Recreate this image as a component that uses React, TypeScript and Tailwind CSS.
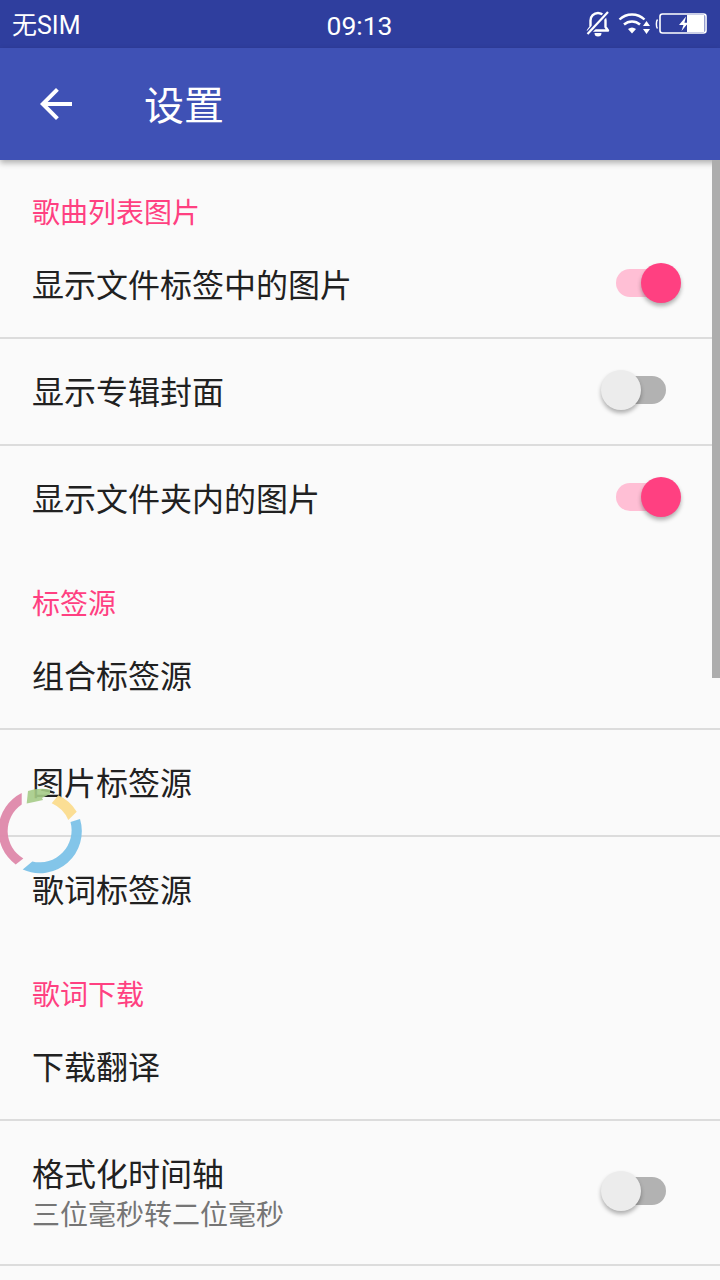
import React from "react";

const cjk = "font-['Roboto','Noto_Sans_CJK_SC','Noto_Sans_CJK_JP',sans-serif]";

function Toggle({ on }: { on: boolean }) {
  return (
    <div className="relative w-[50px] h-[28px] mr-[54px] mb-[3px] shrink-0">
      <div className={on ? "w-full h-full rounded-full bg-[#ffbfd5]" : "w-full h-full rounded-full bg-[#b2b2b2]"} />
      <div
        className={
          on
            ? "absolute -right-[15px] -top-[6px] w-[40px] h-[40px] rounded-full bg-[#ff4081] shadow-[0_3px_4px_rgba(0,0,0,0.3)]"
            : "absolute -left-[15px] -top-[6px] w-[40px] h-[40px] rounded-full bg-[#ececec] shadow-[0_3px_4px_rgba(0,0,0,0.3)]"
        }
      />
    </div>
  );
}

function Row({ title, sub, toggle, tall }: { title: string; sub?: string; toggle?: boolean; tall?: boolean }) {
  return (
    <div className={tall ? "h-[143px] flex items-center justify-between pl-[32px]" : "h-[105px] flex items-center justify-between pl-[32px]"}>
      <div className={sub ? "flex flex-col pt-[5px]" : "flex flex-col pt-[3px]"}>
        <div className="text-[32px] leading-[40px] text-[#212121]">{title}</div>
        {sub && <div className="text-[28px] leading-[41px] text-[#757575]">{sub}</div>}
      </div>
      {toggle !== undefined && <Toggle on={toggle} />}
    </div>
  );
}

const Divider = () => <div className="h-[2px] bg-[#dcdcdc]" />;

const Header = ({ children }: { children: string }) => (
  <div className="h-[72px] pl-[32px] pt-[34px] text-[28px] leading-[40px] text-[#ff4081]">{children}</div>
);

export default function App() {
  return (
    <div className={`relative w-[720px] h-[1280px] overflow-hidden bg-[#fafafa] ${cjk}`}>
      <div className="h-[48px] bg-[#2f3e9e] flex items-center justify-between pl-[12px] pr-[13px] pt-[3px] text-white">
        <div className="w-[200px] text-[25px]">无SIM</div>
        <div className="text-[26.5px] font-['Roboto']">09:13</div>
        <div className="w-[200px] flex items-center justify-end -mt-[3px]">
          <svg width="24" height="26" viewBox="0 0 24 26" fill="none" className="mr-[8px]">
            <path d="M2 19.5h20l-2.5-3.5v-6.5a7.5 7.5 0 0 0-15 0v6.5z" stroke="#fff" strokeWidth="2.4" strokeLinejoin="round" />
            <path d="M8.5 22h7a3.5 3.5 0 0 1-7 0z" fill="#fff" />
            <path d="M1.5 23L22 1" stroke="#2f3e9e" strokeWidth="5" />
            <path d="M1.5 23L22 1" stroke="#fff" strokeWidth="2.2" />
          </svg>
          <svg width="33" height="24" viewBox="0 0 33 24" fill="none" className="mr-[4px]">
            <path d="M1.5 7.5a18 18 0 0 1 25 0" stroke="#fff" strokeWidth="2.4" />
            <path d="M6 12.5a12 12 0 0 1 16 0" stroke="#fff" strokeWidth="2.4" />
            <path d="M10 17a6.5 6.5 0 0 1 8 0l-4 4.5z" fill="#fff" />
            <path d="M28.5 9l3.5 5h-7zM28.5 22l3.5-5h-7z" fill="#fff" />
          </svg>
          <svg width="52" height="22" viewBox="0 0 52 22" fill="none">
            <path d="M2.5 6.5C1 8 1 14 2.5 15.5" stroke="#fff" strokeWidth="1.5" />
            <rect x="5" y="1" width="46" height="19" rx="2.5" stroke="#fff" strokeWidth="1.6" />
            <path d="M32 2h17.5v17H32z" fill="#fff" />
            <path d="M31 3.5l-7 8.5h4.5L26.5 18l5.5-6.5V9.5h-2.5z" fill="#fff" />
            <path d="M32 9.5h-2.5l2.5-4zM32 12l-2.5 3 2.5-1z" fill="#2f3e9e" />
          </svg>
        </div>
      </div>

      <div className="relative z-10 h-[112px] bg-[#3f51b5] flex items-center text-white shadow-[0_3px_6px_rgba(0,0,0,0.3)]">
        <svg width="48" height="48" viewBox="0 0 24 24" className="ml-[32px]" fill="#fff">
          <path d="M20 11H7.83l5.59-5.59L12 4l-8 8 8 8 1.41-1.41L7.83 13H20v-2z" />
        </svg>
        <div className="ml-[64px] pt-[5px] text-[40px] leading-[48px]">设置</div>
      </div>

      <Header>歌曲列表图片</Header>
      <Row title="显示文件标签中的图片" toggle={true} />
      <Divider />
      <Row title="显示专辑封面" toggle={false} />
      <Divider />
      <Row title="显示文件夹内的图片" toggle={true} />

      <Header>标签源</Header>
      <Row title="组合标签源" />
      <Divider />
      <Row title="图片标签源" />
      <Divider />
      <Row title="歌词标签源" />

      <Header>歌词下载</Header>
      <Row title="下载翻译" />
      <Divider />
      <Row title="格式化时间轴" sub="三位毫秒转二位毫秒" toggle={false} tall />
      <Divider />

      <div className="absolute z-20 right-0 top-[160px] w-[8px] h-[518px] bg-[#adadad]" />

      <svg width="100" height="100" viewBox="0 0 100 100" className="absolute z-20 left-[-10px] top-[781px]">
        <path d="M90 38A42 42 0 0 1 32.7 88.5L42.3 80.5A32 32 0 0 0 80.5 41Z" fill="#7cc2e8" fillOpacity="0.95" />
        <path d="M25.7 83.5A42 42 0 0 1 31.7 12L31.7 23.5A32 32 0 0 0 33.3 77.5Z" fill="#de88aa" fillOpacity="0.95" />
        <path d="M36.7 22.5L38 10A42 42 0 0 1 60 8.5L60 13L52 17L53 19L44 21Z" fill="#a5cb87" fillOpacity="0.9" />
        <path d="M68.3 14.3A42 42 0 0 1 86.7 30.7L78.3 39A32 32 0 0 0 61.7 22.3Z" fill="#fbdc8e" fillOpacity="0.95" />
      </svg>
    </div>
  );
}
